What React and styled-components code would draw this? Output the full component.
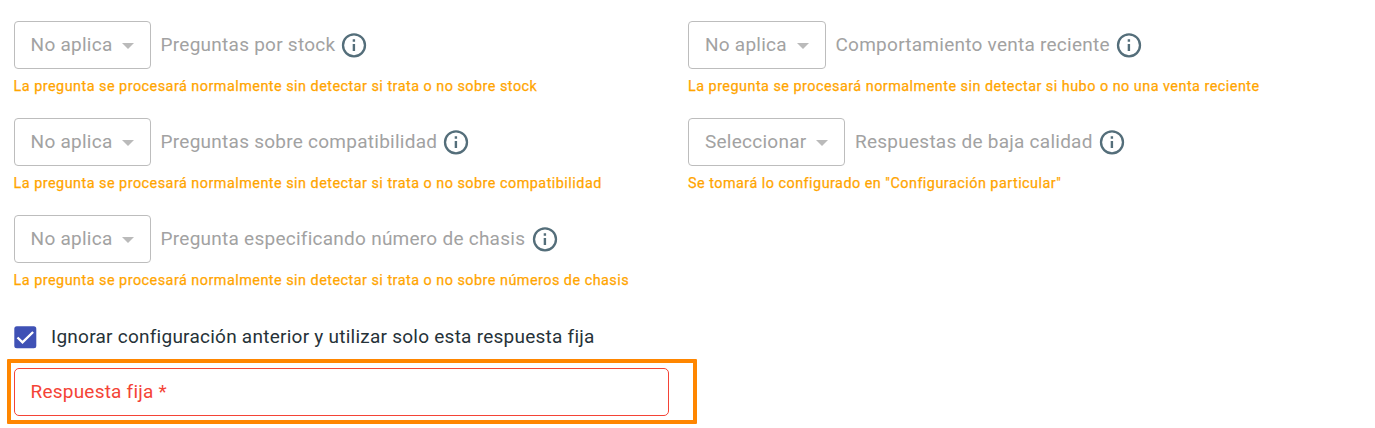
import React from "react";
import styled, { createGlobalStyle } from "styled-components";

const Global = createGlobalStyle`
  * { box-sizing: border-box; }
  body { margin: 0; background: #fff; font-family: Roboto, sans-serif; overflow: hidden; }
`;
const Page = styled.main`
  width: 1375px;
  height: 428px;
  padding: 21px 14px 0;
`;
const Grid = styled.div`
  display: grid;
  grid-template-columns: 674.4px 1fr;
  grid-auto-rows: 97px;
`;
const Field = styled.div`
  display: flex;
  flex-direction: column;
`;
const Row = styled.div`
  display: flex;
  align-items: center;
  height: 48px;
`;
const Select = styled.div`
  display: flex;
  align-items: center;
  justify-content: space-between;
  width: ${(p) => p.$width}px;
  height: 48px;
  padding: 0 16px 2px 15.6px;
  border: 1px solid #bdbdbd;
  border-radius: 4px;
  color: #a2a2a2;
  font-size: 19px;
  letter-spacing: 0.25px;
  white-space: nowrap;
`;
const Arrow = styled.span`
  margin-top: 3px;
  border: 6px solid transparent;
  border-top-color: #bababa;
  border-bottom: 0;
`;
const Label = styled.span`
  margin: 0 5.7px 0 9.6px;
  padding-bottom: 2px;
  width: ${(p) => p.$width}px;
  color: #a2a2a2;
  font-size: 19px;
  letter-spacing: 0.255px;
  white-space: nowrap;
`;
const Hint = styled.div`
  margin: 10px 0 0 -0.4px;
  color: #ffa500;
  font-size: 14.4px;
  font-weight: 400;
  line-height: 16px;
  letter-spacing: 0.48px;
  white-space: nowrap;
  -webkit-text-stroke: 0.25px #ffa500;
`;
const CheckRow = styled.div`
  display: flex;
  align-items: center;
  height: 24px;
  margin-top: 13px;
`;
const Check = styled.svg`
  display: block;
  width: 23px;
  height: 23px;
  margin: 1px 14px 0 0;
`;
const CheckLabel = styled.span`
  padding-bottom: 2px;
  color: #263238;
  font-size: 19px;
  letter-spacing: 0.25px;
  white-space: nowrap;
`;
const Highlight = styled.div`
  width: 690px;
  height: 65px;
  margin: 10px 0 0 -7.5px;
  padding: 5px 0 0 3.5px;
  border: 4px solid #ff8600;
  border-radius: 1px;
`;
const Input = styled.div`
  display: flex;
  align-items: center;
  width: 655px;
  height: 48px;
  padding: 0 15.5px 2px;
  border: 1px solid #f44336;
  border-radius: 5px;
  color: #f44336;
  font-size: 19px;
  letter-spacing: 0.22px;
`;
const InfoSvg = styled.svg`
  display: block;
  flex: none;
`;

function Info() {
  return (
    <InfoSvg width="26" height="26" viewBox="0 0 26 26">
      <circle cx="13" cy="13.3" r="11" fill="none" stroke="#546e7a" strokeWidth="2.3" />
      <path d="M11.7 7.3h2.4v2.4h-2.4zM11.7 12.1h2.4v7h-2.4z" fill="#546e7a" />
    </InfoSvg>
  );
}

const fields = [
  { value: "No aplica", w: 137, label: "Preguntas por stock", lw: 175, hint: "La pregunta se procesará normalmente sin detectar si trata o no sobre stock" },
  { value: "No aplica", w: 137.5, label: "Comportamiento venta reciente", lw: 275, hint: "La pregunta se procesará normalmente sin detectar si hubo o no una venta reciente" },
  { value: "No aplica", w: 137, label: "Preguntas sobre compatibilidad", lw: 277, hint: "La pregunta se procesará normalmente sin detectar si trata o no sobre compatibilidad" },
  { value: "Seleccionar", w: 157, label: "Respuestas de baja calidad", lw: 238.5, hint: 'Se tomará lo configurado en "Configuración particular"' },
  { value: "No aplica", w: 137, label: "Pregunta especificando número de chasis", lw: 366, hint: "La pregunta se procesará normalmente sin detectar si trata o no sobre números de chasis" },
];

export default function App() {
  return (
    <>
      <Global />
      <Page>
        <Grid>
          {fields.map((f) => (
            <Field key={f.label}>
              <Row>
                <Select $width={f.w}>
                  {f.value}
                  <Arrow />
                </Select>
                <Label $width={f.lw}>{f.label}</Label>
                <Info />
              </Row>
              <Hint>{f.hint}</Hint>
            </Field>
          ))}
        </Grid>
        <CheckRow>
          <Check viewBox="0 0 23 23">
            <rect x="0.3" y="0.3" width="22" height="22" rx="2.5" fill="#3f51b5" />
            <path d="M3.5 11.5l5 4.8L19.1 6" fill="none" stroke="#fff" strokeWidth="2.4" />
          </Check>
          <CheckLabel>Ignorar configuración anterior y utilizar solo esta respuesta fija</CheckLabel>
        </CheckRow>
        <Highlight>
          <Input>Respuesta fija *</Input>
        </Highlight>
      </Page>
    </>
  );
}
